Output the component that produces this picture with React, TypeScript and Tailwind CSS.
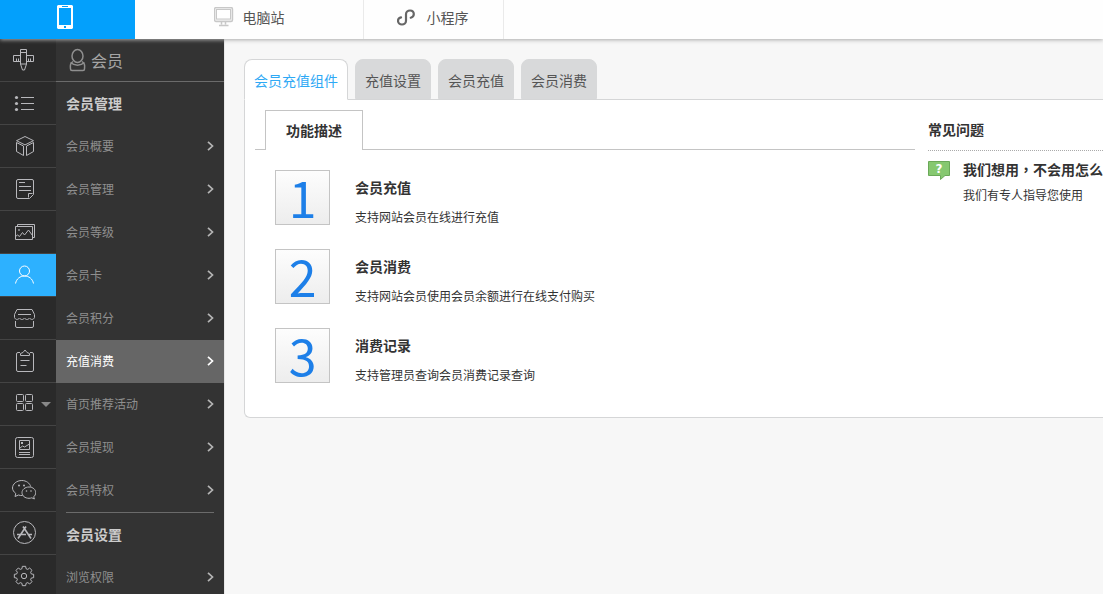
import React, { useState } from 'react';

interface RailItem {
    label: string;
    icon: React.ReactNode;
    hasMenu?: boolean;
}

interface MenuGroup {
    title: string;
    items: string[];
}

const gearPoints = Array.from({ length: 8 })
    .flatMap((_, i) => {
        const base = (i * Math.PI) / 4;
        return [
            [-0.27, 7.6],
            [-0.17, 9.8],
            [0.17, 9.8],
            [0.27, 7.6],
        ].map(([offset, r]) => {
            const x = 12 + r * Math.sin(base + offset);
            const y = 12 - r * Math.cos(base + offset);
            return `${x.toFixed(2)},${y.toFixed(2)}`;
        });
    })
    .join(' ');

const railItems: RailItem[] = [
    {
        label: '设计',
        icon: (
            <>
                <path d="M8.5 7.5h-7v6h7M14.5 7.5h7v6h-7M4.5 13.5v-3M6.5 13.5v-3M16.5 13.5v-3M18.5 13.5v-3" />
                <path d="M8.5 1.5h6v14.5l-2 6h-2l-2-6zM8.5 4.5h6M8.5 16h6" />
            </>
        ),
    },
    {
        label: '栏目',
        icon: (
            <>
                <path d="M9 6.5h13M9 12.5h13M9 18.5h13" />
                <g fill="currentColor" stroke="none">
                    <circle cx="4.5" cy="6.5" r="1.6" />
                    <circle cx="4.5" cy="12.5" r="1.6" />
                    <circle cx="4.5" cy="18.5" r="1.6" />
                </g>
            </>
        ),
    },
    {
        label: '产品',
        icon: (
            <path d="M13 2.5l8.5 4.2-8.5 4.2-8.5-4.2zM4.5 8.5v9l7 4v-9.5zM21.5 8.5v9l-7 4v-9.5z" />
        ),
    },
    {
        label: '文章',
        icon: (
            <>
                <path d="M6 2.5h14a1.5 1.5 0 0 1 1.5 1.5v13.5l-4 4H6a1.5 1.5 0 0 1-1.5-1.5V4A1.5 1.5 0 0 1 6 2.5z" />
                <path d="M16.5 20.5v-4h4M7 5.5h6M7 9.5h12M7 13.5h12" />
            </>
        ),
    },
    {
        label: '图册',
        icon: (
            <>
                <path d="M3.5 6.5h17v13h-17zM5.5 6.5v-2h17v13h-2" />
                <path d="M3.5 16.5l2-1.5 2 1.5 3-4 2 2.5 4-5 4 5.5" />
                <circle cx="7" cy="10" r=".5" />
            </>
        ),
    },
    {
        label: '会员',
        icon: (
            <>
                <circle cx="12.5" cy="8" r="5" />
                <path d="M3.5 20.5c1-4.7 4.5-7.5 9-7.5s8 2.8 9 7.5" />
            </>
        ),
    },
    {
        label: '商城',
        icon: (
            <>
                <path d="M5 3.500h15l2.500 5v3c-1 2.500-3.500 2.500-5 .500-1.500 2-3.500 2-5 0-1.500 2-3.500 2-5 0-1.500 2-4 2-5-.500v-3z" />
                <path d="M6 8.500h13M3.500 15v5a1.500 1.500 0 0 0 1.500 1.500h15a1.500 1.500 0 0 0 1.500-1.500v-5" />
            </>
        ),
    },
    {
        label: '订单',
        icon: (
            <>
                <path d="M8 3.500H6A1.500 1.500 0 0 0 4.500 5v16A1.500 1.500 0 0 0 6 22.500h14a1.500 1.500 0 0 0 1.500-1.500V5A1.500 1.500 0 0 0 20 3.500h-2" />
                <path d="M8.500 6.500v-2l2.500-1 2-2.500 2 2.500 2.500 1v2zM8.500 11.500h9M8.500 16.500h6" />
            </>
        ),
    },
    {
        label: '应用',
        hasMenu: true,
        icon: (
            <>
                <rect x="4.5" y="2.5" width="7" height="7" rx="1" />
                <rect x="13.5" y="2.5" width="7" height="7" rx="1" />
                <rect x="4.5" y="11.5" width="7" height="7" rx="1" />
                <rect x="13.5" y="11.5" width="7" height="7" rx="1" />
            </>
        ),
    },
    {
        label: '广告',
        icon: (
            <>
                <rect x="3.5" y="2.5" width="18" height="20" rx="2" />
                <path d="M7.500 5.500h10v9h-10zM7.500 13.500l3-2.500 2 1 5-3M7 17.500h11M7 19.500h11" />
                <rect x="9" y="7" width="2" height="2" fill="currentColor" stroke="none" />
            </>
        ),
    },
    {
        label: '微信',
        icon: (
            <>
                <path d="M10.500 17.500c-1.500.200-3-.100-4-.500l-3.500 1.500.800-3C1.800 14 .500 12 .500 10 .500 6 4.700 2.500 9.800 2.500c4.500 0 8 2.700 9 6.200" />
                <path d="M17 9c-4 0-7 2.600-7 5.700s3 5.600 7 5.600c1 0 2-.200 2.800-.500l2.600 1.200-.700-2.200c1.200-1 2-2.500 2-4.100C23.700 11.600 21 9 17 9z" />
                <g fill="currentColor" stroke="none">
                    <circle cx="7" cy="7.500" r="1" />
                    <circle cx="12" cy="7.500" r="1" />
                    <circle cx="14.500" cy="13" r=".8" />
                    <circle cx="19" cy="13" r=".8" />
                </g>
            </>
        ),
    },
    {
        label: '应用商店',
        icon: (
            <>
                <circle cx="12.5" cy="11.5" r="11" />
                <path d="M11 5.500l8 12M14 5.500l-8 12M5 13.500h9M17 13.500h3" strokeWidth="1.6" />
            </>
        ),
    },
    {
        label: '设置',
        icon: (
            <>
                <polygon points={gearPoints} />
                <circle cx="12" cy="12" r="2.7" />
            </>
        ),
    },
];

const menuGroups: MenuGroup[] = [
    {
        title: '会员管理',
        items: [
            '会员概要',
            '会员管理',
            '会员等级',
            '会员卡',
            '会员积分',
            '充值消费',
            '首页推荐活动',
            '会员提现',
            '会员特权',
        ],
    },
    { title: '会员设置', items: ['浏览权限'] },
];

const tabs = ['会员充值组件', '充值设置', '会员充值', '会员消费'];

const features = [
    { title: '会员充值', text: '支持网站会员在线进行充值' },
    { title: '会员消费', text: '支持网站会员使用会员余额进行在线支付购买' },
    { title: '消费记录', text: '支持管理员查询会员消费记录查询' },
];

const TopBar: React.FC = () => (
    <header className="relative z-10 flex h-[39px] shrink-0 bg-[#fefefe] text-sm text-[#555] shadow-[0_1px_4px_#aaa]">
        <button aria-label="手机站" className="flex w-[135px] items-center justify-center bg-[#03a0fc] pr-[6px] pb-[6px]">
            <svg width="16" height="24" viewBox="0 0 16 24">
                <path fill="#fff" fillRule="evenodd" d="M1 0h14l1 1v22l-1 1H1l-1-1V1zM2 3v17h12V3zM5 1h6v1H5zM7 21h2v2H7z" />
            </svg>
        </button>
        <button className="flex w-[229px] items-center justify-center gap-[9px] border-r border-[#eaeaea] pb-[6px]">
            <svg width="20" height="20" viewBox="0 0 20 20" fill="none" stroke="#c8c8c8">
                <rect x=".5" y=".5" width="18" height="14" rx="1.5" fill="#f0f0f0" strokeWidth="1.4" />
                <rect x="2.5" y="2.5" width="14" height="9.5" fill="#fff" />
                <path d="M7.500 15v2.500M11.500 15v2.500M5 18.500h9.500" strokeWidth="1.5" />
            </svg>
            电脑站
        </button>
        <button className="flex w-[140px] items-center justify-center gap-[10px] border-r border-[#eaeaea] pr-[2px] pb-[6px]">
            <svg width="20" height="20" viewBox="0 0 20 20" fill="none" stroke="#666" strokeWidth="2.2" strokeLinecap="round">
                <path d="M4 10.300C2.300 10.600 1 11.800 1 13.800 1 16 2.800 17.500 5 17.500s4-1.500 4-3.700V7.200C9 5 10.800 3.500 13 3.500s3.800 1.500 3.800 3.600c0 1.900-1.300 3.200-3 3.600" />
            </svg>
            小程序
        </button>
    </header>
);

const IconRail: React.FC = () => (
    <nav aria-label="主导航" className="w-14 shrink-0 bg-[#2a2a2a]">
        {railItems.map((item) => (
            <button
                key={item.label}
                aria-label={item.label}
                className={`flex h-[43px] w-full items-center border-b border-[#444] pl-3 ${
                    item.label === '会员' ? 'bg-[#2db1ff] text-white' : 'text-[#b8b8bc]'
                }`}
            >
                <svg width="24" height="24" viewBox="0 0 24 24" className="shrink-0" fill="none" stroke="currentColor" strokeLinejoin="round">
                    {item.icon}
                </svg>
                {item.hasMenu && (
                    <svg width="10" height="5" viewBox="0 0 10 5" className="ml-[5px]">
                        <path fill="#888" d="M0 0h10L5 5z" />
                    </svg>
                )}
            </button>
        ))}
    </nav>
);

const SideMenu: React.FC = () => (
    <aside className="w-[168px] shrink-0 bg-[#333]">
        <h1 className="flex h-[43px] items-center gap-[5px] border-b border-[#6b6b6b] pl-[13px] text-base text-[#a5a5a5]">
            <svg width="17" height="24" viewBox="0 0 17 24" fill="none" stroke="#8f8f8f" strokeWidth="1.5">
                <ellipse cx="8.500" cy="8" rx="5.500" ry="6.500" />
                <path d="M4 13.500c-2.500 2-3 3-2.500 7.500 0 1 .500 1.500 1.500 1.500h11c1 0 1.500-.500 1.500-1.500.500-4.500 0-5.500-2.500-7.500M1.500 14.500c4 3.500 10 3.500 14 0" />
            </svg>
            会员
        </h1>
        {menuGroups.map((group, index) => (
            <section key={group.title}>
                {index > 0 && <hr className="mx-[10px] border-[#6b6b6b]" />}
                <h2 className="flex h-[43px] items-center pb-[2px] pl-[10px] text-sm font-bold text-[#ccc]">{group.title}</h2>
                <ul>
                    {group.items.map((label) => (
                        <li key={label}>
                            <a
                                href="#"
                                className={`flex h-[43px] items-center justify-between px-[10px] pb-[2px] text-xs ${
                                    label === '充值消费' ? 'bg-[#666] text-white' : 'text-[#8f8f8f]'
                                }`}
                            >
                                {label}
                                <svg
                                    width="7"
                                    height="10"
                                    viewBox="0 0 7 10"
                                    fill="none"
                                    stroke={label === '充值消费' ? '#fff' : '#b5b5b5'}
                                    strokeWidth="1.7"
                                >
                                    <path d="M1 .8L5.500 5 1 9.200" />
                                </svg>
                            </a>
                        </li>
                    ))}
                </ul>
            </section>
        ))}
    </aside>
);

const FeatureList: React.FC = () => (
    <section className="min-w-0 flex-1">
        <div className="flex">
            <div className="w-[10px] border-b border-[#c4c4c4]" />
            <h2 className="flex h-10 items-center border border-b-0 border-[#c4c4c4] px-5 pb-[2px] text-sm font-bold">功能描述</h2>
            <div className="flex-1 border-b border-[#c4c4c4]" />
        </div>
        <ol className="mt-5 space-y-6 pl-5">
            {features.map((feature, index) => (
                <li key={feature.title} className="flex gap-[25px]">
                    <div className="flex size-[55px] shrink-0 items-center justify-center border border-[#c4c4c4] bg-linear-to-b from-[#fdfdfd] to-[#ededed] pb-1 text-[50px] leading-none text-[#1d7fe8]">
                        {index + 1}
                    </div>
                    <div className="pt-[7px]">
                        <h3 className="text-sm leading-5 font-bold">{feature.title}</h3>
                        <p className="mt-3 text-xs leading-4">{feature.text}</p>
                    </div>
                </li>
            ))}
        </ol>
    </section>
);

const Faq: React.FC = () => (
    <section className="w-[175px] shrink-0 whitespace-nowrap">
        <h2 className="flex h-[41px] items-center border-b border-dotted border-[#aaa] pb-[2px] text-sm font-bold">常见问题</h2>
        <div className="mt-2 flex gap-3">
            <svg width="23" height="19" viewBox="0 0 23 19" className="mt-[2px] shrink-0">
                <path d="M.5.500h21v14h-4.500l-4.500 4v-4h-12z" fill="#86c870" stroke="#6aa858" />
                <text x="11" y="12" textAnchor="middle" fill="#fff" className="font-['DejaVu_Sans',sans-serif] text-[12px] font-bold">
                    ?
                </text>
            </svg>
            <div>
                <h3 className="text-sm leading-5 font-bold">
                    我们想用<span className="font-['Noto_Sans_CJK_TC',sans-serif]">，</span>不会用怎么
                </h3>
                <p className="mt-[6px] text-xs leading-5">我们有专人指导您使用</p>
            </div>
        </div>
    </section>
);

export default function App() {
    const [activeTab, setActiveTab] = useState(tabs[0]);

    return (
        <div className="flex h-screen flex-col overflow-hidden bg-[#f7f7f7] font-['Noto_Sans_CJK_SC',sans-serif] text-[#333]">
            <TopBar />
            <div className="flex min-h-0 flex-1">
                <IconRail />
                <SideMenu />
                <main className="min-w-0 flex-1 border-l border-[#e8e8e8] pt-5 pl-[19px]">
                    <div role="tablist" className="flex gap-[7px]">
                        {tabs.map((tab) => (
                            <button
                                key={tab}
                                role="tab"
                                aria-selected={tab === activeTab}
                                onClick={() => setActiveTab(tab)}
                                className={`rounded-t-lg border px-[9px] text-sm ${
                                    tab === activeTab
                                        ? 'relative -mb-px h-[41px] border-[#d5d6d7] border-b-white bg-white text-[#2fa9f5]'
                                        : 'h-10 border-[#d8d9da] bg-[#d8d9da] pt-[2px] text-[#555]'
                                }`}
                            >
                                {tab}
                            </button>
                        ))}
                    </div>
                    <div className="flex gap-[13px] rounded-bl-md border border-r-0 border-[#d5d6d7] bg-white pt-[10px] pb-[34px] pl-[10px]">
                        <FeatureList />
                        <Faq />
                    </div>
                </main>
            </div>
        </div>
    );
}
